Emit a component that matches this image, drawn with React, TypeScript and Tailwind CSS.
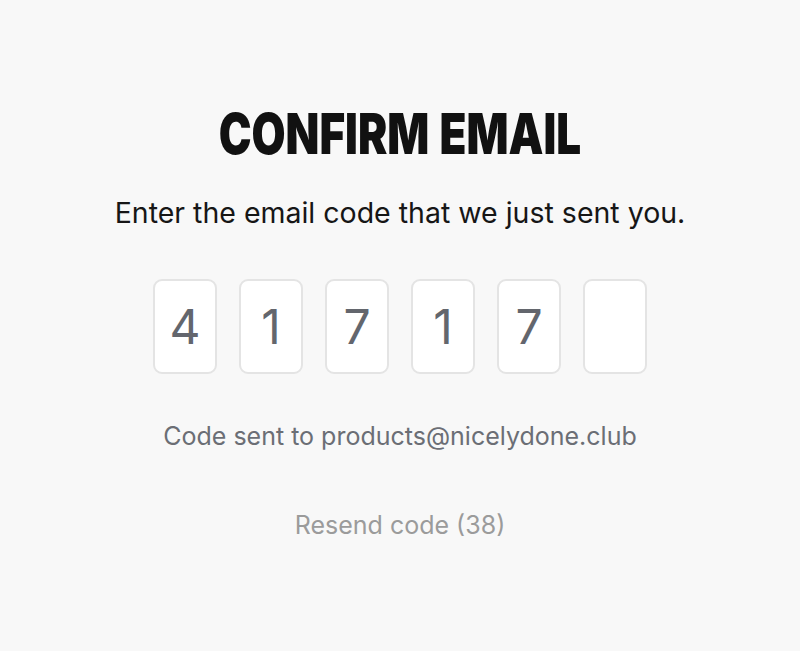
import React, { useState } from 'react';

const ConfirmEmail = () => {
  const [digits] = useState(['4', '1', '7', '1', '7', '']);

  return (
    <div className="min-h-screen bg-[#f8f8f8] flex flex-col items-center pt-[106px] font-['Inter','Liberation_Sans',sans-serif]">
      <h1 className="text-[56px] leading-[56px] font-black text-[#111111] tracking-[0px] [word-spacing:2px] uppercase scale-x-[0.785]">
        Confirm Email
      </h1>
      <p className="mt-[33px] text-[28.5px] leading-[36px] text-[#161616]">
        Enter the email code that we just sent you.
      </p>

      <div className="mt-[48px] flex gap-[22px]">
        {digits.map((d, i) => (
          <div
            key={i}
            className="w-[64px] h-[95px] bg-white border-2 border-[#e4e4e4] rounded-[9px] flex items-center justify-center text-[48px] text-[#63666d]"
          >
            {d}
          </div>
        ))}
      </div>

      <p className="mt-[46px] text-[25px] leading-[32px] text-[#6b6e75]">
        Code sent to products@nicelydone.club
      </p>

      <button className="mt-[57px] text-[25px] leading-[32px] text-[#9b9b9b]">
        Resend code (38)
      </button>
    </div>
  );
};

export default function App() {
  return <ConfirmEmail />;
}
